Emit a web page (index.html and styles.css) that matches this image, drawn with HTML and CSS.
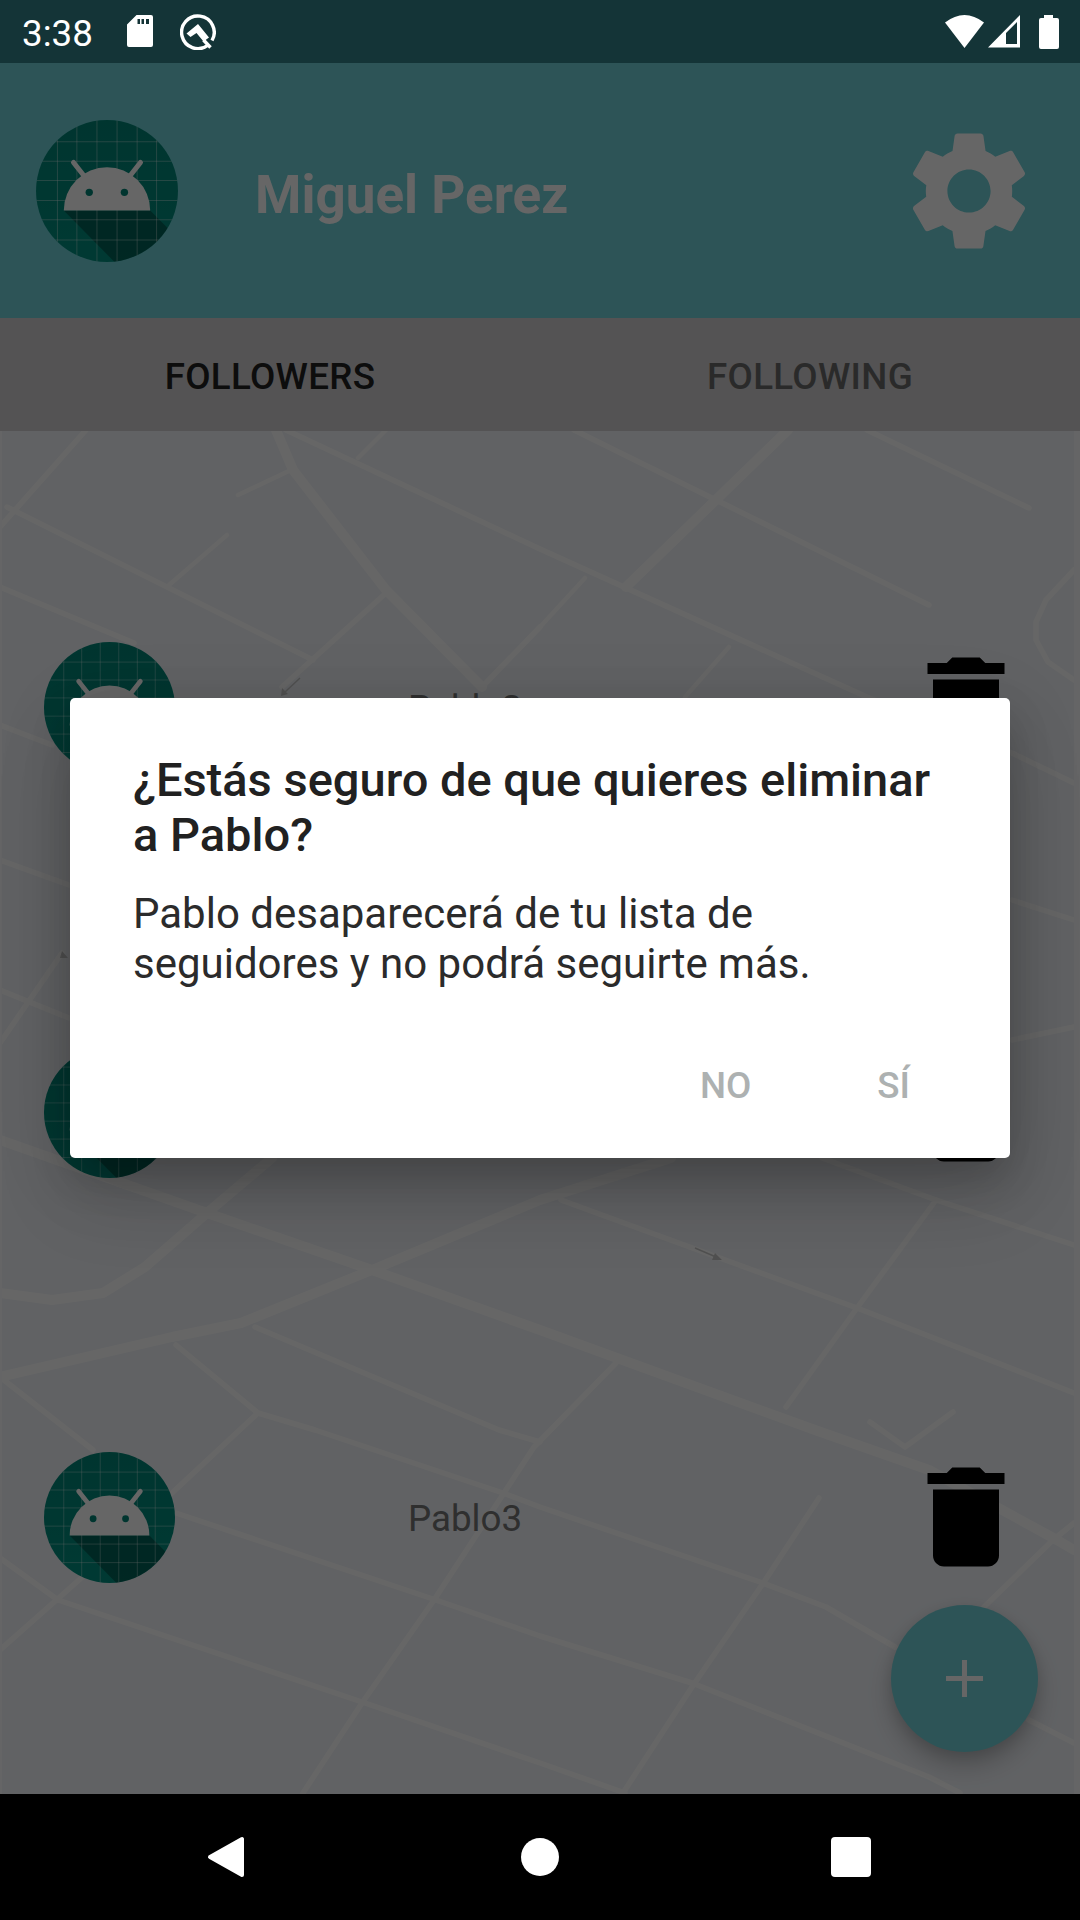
FILE: index.html
```html
<!DOCTYPE html>
<html lang="es">
<head>
<meta charset="utf-8">
<title>Followers</title>
<link rel="stylesheet" href="styles.css">
</head>
<body>
<svg class="defs" width="0" height="0" aria-hidden="true">
  <defs>
    <linearGradient id="tealfade" x1="0" y1="0" x2="0" y2="1">
      <stop offset="0" stop-color="#008577"/>
      <stop offset="1" stop-color="#009080"/>
    </linearGradient>
    <clipPath id="disc"><circle cx="212" cy="212" r="212"/></clipPath>
    <symbol id="avatar" viewBox="0 0 424 424">
      <g clip-path="url(#disc)">
        <rect width="424" height="424" fill="url(#tealfade)"/>
        <polygon points="83,270 341,270 440,370 440,440 250,440" fill="#000" opacity=".3"/>
        <g stroke="#fff" stroke-opacity=".36" stroke-width="3">
          <path d="M64 0V424M122 0V424M182 0V424M242 0V424M302 0V424M360 0V424"/>
          <path d="M0 65H424M0 123H424M0 181H424M0 240H424M0 298H424M0 358H424"/>
        </g>
      </g>
      <path d="M83 270a129 129 0 0 1 258 0Z" fill="#fff"/>
      <path d="M142 165 112 127M282 165 312 127" stroke="#fff" stroke-width="15" stroke-linecap="round"/>
      <circle cx="159" cy="216" r="11" fill="#008577"/>
      <circle cx="264" cy="216" r="11" fill="#008577"/>
    </symbol>
    <symbol id="trash" viewBox="0 0 24 24">
      <path d="M6 19c0 1.1.9 2 2 2h8c1.1 0 2-.9 2-2V7H6v12zM19 4h-3.5l-1-1h-5l-1 1H5v2h14V4z"/>
    </symbol>
  </defs>
</svg>

<div class="app">
  <div class="status">
    <span class="clock">3:38</span>
    <svg class="ic-sd" width="26" height="32" viewBox="0 0 26 32"><path fill-rule="evenodd" d="M9.500 0H24a2 2 0 0 1 2 2V30a2 2 0 0 1-2 2H2a2 2 0 0 1-2-2V9.500ZM10.500 4V9H13V4ZM14.500 4V9H17V4ZM19 4V9H22V4Z"/></svg>
    <svg class="ic-q" width="36" height="36" viewBox="0 0 36 36">
      <path class="q-ring" d="M27.500 31.500A16.300 16.300 0 1 1 32 26.500"/>
      <path class="q-ring" d="M23.500 26 30.500 33.500"/>
      <path d="M6.500 19.500 18 10 29 23.500 23.500 27.500 16.500 19 10.500 23Z"/>
    </svg>
    <svg class="ic-wifi" width="39" height="33" viewBox="0 0 39 33"><path d="M0 7.500Q19.500-7.500 39 7.500L19.500 33Z"/></svg>
    <svg class="ic-signal" width="32" height="33" viewBox="0 0 32 33"><path fill-rule="evenodd" d="M0 32.500 32 0V32.500ZM18 18V29H29V7Z"/></svg>
    <svg class="ic-batt" width="20" height="34" viewBox="0 0 20 34"><path d="M5 0H14V3H18a2 2 0 0 1 2 2V32a2 2 0 0 1-2 2H2a2 2 0 0 1-2-2V5a2 2 0 0 1 2-2H5Z"/></svg>
  </div>

  <main class="main">
    <header class="profile">
      <svg class="profile-avatar"><use href="#avatar"/></svg>
      <h1 class="profile-name">Miguel Perez</h1>
      <svg class="gear" viewBox="0 0 24 24"><path d="M19.140 12.940c.04-.3.06-.61.06-.94 0-.32-.02-.64-.07-.94l2.030-1.580c.18-.14.23-.41.12-.61l-1.920-3.320c-.12-.22-.37-.29-.59-.22l-2.390.96c-.5-.38-1.030-.7-1.620-.94l-.36-2.540c-.04-.24-.24-.41-.48-.41h-3.840c-.24 0-.43.17-.47.41l-.36 2.540c-.59.24-1.130.57-1.620.94l-2.390-.96c-.22-.08-.47 0-.59.22L2.740 8.870c-.12.21-.08.47.12.61l2.030 1.580c-.05.3-.09.63-.09.94s.02.64.07.94l-2.030 1.580c-.18.14-.23.41-.12.61l1.920 3.320c.12.22.37.29.59.22l2.390-.96c.5.38 1.030.7 1.620.94l.36 2.540c.05.24.24.41.48.41h3.840c.24 0 .44-.17.47-.41l.36-2.540c.59-.24 1.130-.56 1.620-.94l2.390.96c.22.08.47 0 .59-.22l1.920-3.320c.12-.22.07-.47-.12-.61l-2.010-1.580zM12 15.600c-1.980 0-3.600-1.620-3.600-3.600s1.620-3.600 3.600-3.600 3.600 1.620 3.600 3.600-1.620 3.600-3.600 3.600z"/></svg>
    </header>

    <nav class="tabs">
      <div class="tab tab-on">FOLLOWERS</div>
      <div class="tab">FOLLOWING</div>
    </nav>

    <section class="list">
      <svg class="map" width="1080" height="1363" viewBox="0 431 1080 1363" aria-hidden="true">
        <g class="road-m">
          <polyline points="86,430 0,527"/>
          <polyline points="7,507 313,660"/>
          <polyline points="286,430 540,549 867,697 1012,753 1074,783"/>
          <polyline points="574,430 929,605"/>
          <polyline points="867,430 1029,508"/>
          <polyline points="386,593 282,687"/>
          <polyline points="0,587 134,643"/>
          <polyline points="540,627 482,687"/>
          <polyline points="0,725 52,745"/>
          <polyline points="0,860 69,885"/>
          <polyline points="62,953 0,1043"/>
          <polyline points="0,990 69,1018"/>
          <polyline points="1074,570 1046,600 1036,622 1036,640 1048,662 1074,680"/>
          <polyline points="1012,900 1074,920"/>
          <polyline points="255,1327 499,1430 540,1442"/>
          <polyline points="176,1345 258,1413 315,1430 503,1493 540,1507 760,1582 826,1607 895,1647"/>
          <polyline points="1029,1720 1074,1743"/>
          <polyline points="258,1413 172,1493 79,1580 0,1650"/>
          <polyline points="0,1377 93,1450"/>
          <polyline points="0,1558 58,1600 362,1702 540,1763 625,1793"/>
          <polyline points="176,1513 430,1598 540,1636 692,1683 929,1777 960,1793"/>
          <polyline points="616,1363 534,1447 434,1600 362,1703 303,1793"/>
          <polyline points="936,1200 857,1308 786,1407"/>
          <polyline points="561,1200 857,1308 1074,1393"/>
          <polyline points="822,1158 936,1200 1074,1245"/>
          <polyline points="1012,1040 1074,1027"/>
          <polyline points="870,1422 905,1447 953,1412"/>
          <polyline points="819,1498 764,1582 692,1687 623,1793"/>
          <polyline points="1074,1523 1053,1540 984,1607"/>
        </g>
        <g class="road-s">
          <polyline points="227,535 169,585"/>
          <polyline points="238,495 291,470"/>
          <polyline points="386,430 358,458"/>
          <polyline points="585,578 540,627"/>
          <polyline points="729,647 685,697"/>
        </g>
        <g class="road-l">
          <polyline points="276,430 293,470 386,590 482,687"/>
          <polyline points="788,430 626,587"/>
          <polyline points="0,1140 207,1213 372,1270 540,1330 815,1430 929,1470 1057,1540 1074,1550"/>
          <polyline points="272,1158 207,1213 145,1267 103,1293 52,1300 0,1293"/>
          <polyline points="671,1158 540,1200 372,1270 241,1323 172,1337 0,1377"/>
        </g>
        <g class="arrow">
          <path d="M300 678 284 693"/>
          <path d="M695 1248 716 1257"/>
        </g>
        <path class="arrow-head" d="M281 696 282 688 288 694ZM722 1260 712 1260 715 1253ZM62 951 68 958 60 958Z"/>
        <rect class="map-edge" x="1074" y="431" width="6" height="1363"/>
        <rect class="map-edge" x="0" y="431" width="2" height="1363"/>
      </svg>

      <div class="row">
        <svg class="row-avatar"><use href="#avatar"/></svg>
        <span class="row-name">Pablo2</span>
        <svg class="row-trash"><use href="#trash"/></svg>
      </div>
      <div class="row">
        <svg class="row-avatar"><use href="#avatar"/></svg>
        <span class="row-name">Pablo1</span>
        <svg class="row-trash"><use href="#trash"/></svg>
      </div>
      <div class="row">
        <svg class="row-avatar"><use href="#avatar"/></svg>
        <span class="row-name">Pablo3</span>
        <svg class="row-trash"><use href="#trash"/></svg>
      </div>
    </section>

    <button class="fab" type="button" aria-label="Añadir">
      <svg width="37" height="37" viewBox="0 0 37 37"><path d="M16 0H21V16H37V21H21V37H16V21H0V16H16Z"/></svg>
    </button>

    <div class="scrim">
      <div class="dialog">
        <h2 class="dialog-title">¿Estás seguro de que quieres eliminar a Pablo?</h2>
        <p class="dialog-body">Pablo desaparecerá de tu lista de seguidores y no podrá seguirte más.</p>
        <div class="dialog-actions">
          <span class="dialog-btn btn-no">NO</span>
          <span class="dialog-btn btn-yes">SÍ</span>
        </div>
      </div>
    </div>
  </main>

  <div class="navbar">
    <svg class="nav-back" width="37" height="42" viewBox="0 0 37 42"><path d="M3 21 35 3V39Z"/></svg>
    <span class="nav-home"></span>
    <span class="nav-recent"></span>
  </div>
</div>
</body>
</html>
```

FILE: styles.css
```css
* { box-sizing: border-box; }
html, body { margin: 0; padding: 0; }
body { font-family: Roboto, "Noto Sans", sans-serif; background: #000; }
.defs { position: absolute; }

.app { width: 1080px; height: 1920px; display: flex; flex-direction: column; overflow: hidden; }

/* status bar */
.status { height: 63px; flex: none; background: #143437; display: flex; align-items: center; padding-left: 22px; color: #fff; }
.status svg { fill: #fff; flex: none; }
.clock { font-size: 36.75px; line-height: 63px; width: 105px; padding-top: 3px; }
.ic-sd { margin-top: -1px; }
.ic-q { margin-left: 27px; }
.q-ring { fill: none; stroke: #fff; stroke-width: 3.4; }
.ic-wifi { margin-left: auto; }
.ic-signal { margin-left: 4px; }
.ic-batt { margin-left: 19px; margin-right: 21px; }

/* main */
.main { position: relative; flex: 1; display: flex; flex-direction: column; min-height: 0; }

.profile { height: 255px; flex: none; background: #70d2d9; display: flex; align-items: center; padding-left: 36px; }
.profile-avatar { width: 142px; height: 142px; flex: none; }
.profile-name { margin: 8px 0 0 77px; font-size: 53px; font-weight: 700; color: #fff; line-height: 60px; }
.gear { width: 144px; height: 144px; fill: #fff; margin-left: auto; margin-right: 39px; flex: none; }

.tabs { height: 113px; flex: none; background: #d2d0d2; display: flex; }
.tab { flex: 1; display: flex; align-items: center; justify-content: center; padding-top: 4px; font-size: 36.75px; font-weight: 500; letter-spacing: .3px; color: #6a6a6a; }
.tab-on { color: #212121; }

.list { position: relative; flex: 1; background: #f2f5fa; padding-top: 73px; overflow: hidden; }
.map { position: absolute; left: 0; top: 0; }
.map polyline { fill: none; stroke: #ffffff; stroke-linejoin: round; stroke-linecap: round; }
.road-s polyline { stroke-width: 4.5; }
.road-m polyline { stroke-width: 5.5; }
.road-l polyline { stroke-width: 10; }
.arrow path { stroke: #c9c9c9; stroke-width: 1.5; fill: none; }
.arrow-head { fill: #c9c9c9; }
.map-edge { fill: #fcfcff; }

.row { position: relative; height: 405px; display: flex; align-items: center; padding-left: 44px; padding-right: 48px; }
.row-avatar { width: 131px; height: 131px; flex: none; margin-top: 2px; }
.row-name { margin: 4px 0 0 233px; font-size: 36.75px; color: #757575; }
.row-trash { width: 132px; height: 132px; margin-left: auto; fill: #000; flex: none; }

.fab { position: absolute; left: 891px; top: 1542px; width: 147px; height: 147px; border: 0; padding: 0; border-radius: 50%; background: #70d2d9; display: flex; align-items: center; justify-content: center; box-shadow: 0 14px 24px rgba(0,0,0,.2), 0 4px 14px rgba(0,0,0,.1); }
.fab svg { fill: #fff; }

/* dialog */
.scrim { position: absolute; inset: 0; background: rgba(0,0,0,.6); display: flex; align-items: center; justify-content: center; }
.dialog { width: 940px; height: 460px; margin-top: -1px; background: #fff; border-radius: 5px; padding: 54px 64px 0 63px; display: flex; flex-direction: column; box-shadow: 0 40px 80px rgba(0,0,0,.12), 0 15px 80px rgba(0,0,0,.1), 0 20px 40px rgba(0,0,0,.15); }
.dialog-title { margin: 0; font-size: 47px; line-height: 55px; font-weight: 500; color: #212121; }
.dialog-body { margin: 27px 0 0; font-size: 42px; line-height: 50px; color: #2b2b2b; }
.dialog-actions { margin-top: 75px; display: flex; justify-content: flex-end; gap: 126px; padding-right: 36px; }
.dialog-btn { font-size: 36.75px; font-weight: 500; color: #adb1b1; line-height: 44px; }

/* nav bar */
.navbar { height: 126px; flex: none; background: #000; display: flex; align-items: center; padding-left: 207px; }
.nav-back { fill: #fff; stroke: #fff; stroke-width: 4; stroke-linejoin: round; flex: none; }
.nav-home { width: 38px; height: 38px; border-radius: 50%; background: #fff; margin-left: 277px; flex: none; }
.nav-recent { width: 40px; height: 40px; border-radius: 4px; background: #fff; margin-left: 272px; flex: none; }
```
